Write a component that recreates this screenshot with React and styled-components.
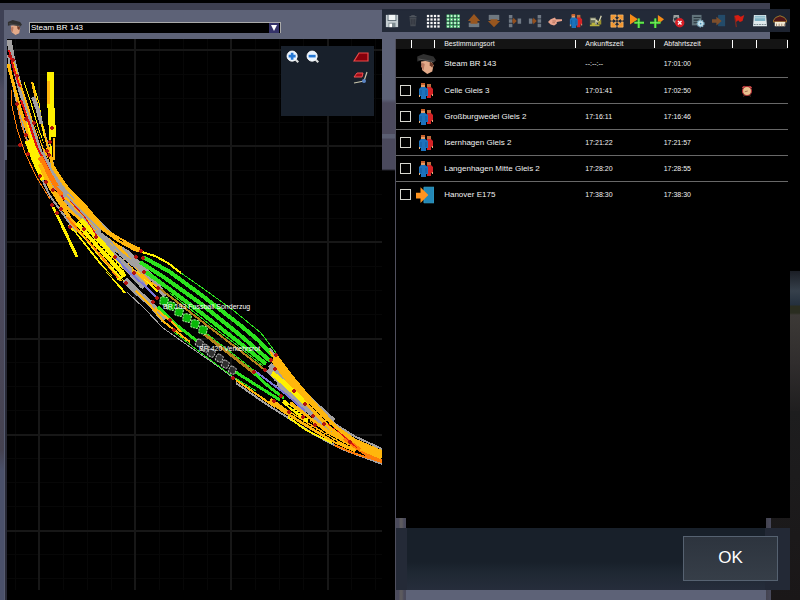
import React from "react";
import styled, { createGlobalStyle } from "styled-components";

const GlobalStyle = createGlobalStyle`
  * { box-sizing: border-box; }
  body {
    margin: 0;
    background: #000;
    color: #f2f2f2;
    font-family: "Liberation Sans", Arial, sans-serif;
  }
`;

const Page = styled.div`
  display: grid;
  grid-template-columns: minmax(0, 382fr) minmax(0, 418fr);
  min-height: 100vh;
  background: #000;
`;

const MapPane = styled.section`
  display: flex;
  flex-direction: column;
  padding: 10px 0 10px 7px;
  background:
    linear-gradient(#000 0 3px, #3d3f50 3px 10px, transparent 10px),
    linear-gradient(#3e4155 0 75px, #4d4b5f 90px 240px, #454250 450px, #4a5069 470px) left / 4px 100% no-repeat,
    linear-gradient(90deg, #565b70 0 5px, #262733 5px 7px) left bottom / 7px calc(100% - 160px) no-repeat,
    linear-gradient(#5d6277 0 170px, #000 170px);
`;

const DriverBar = styled.div`
  display: flex;
  flex: none;
  align-items: center;
  gap: 7px;
  height: 29px;
  padding: 6px 101px 0 0;
`;

const SelectBox = styled.div`
  position: relative;
  flex: 1;
  height: 11px;
  border: 1px solid #aaa;
  border-width: 1px 1px 0 1px;
  background: #000;
`;

const DriverSelect = styled.select`
  display: block;
  appearance: none;
  width: 100%;
  height: 10px;
  padding: 0 0 0 1px;
  border: 0;
  background: transparent;
  color: #fff;
  font: 8px/10px "Liberation Sans", Arial, sans-serif;
`;

const SelectArrow = styled.svg`
  position: absolute;
  right: 1px;
  top: 0;
  pointer-events: none;
`;

const MapArea = styled.div`
  position: relative;
  flex: 1;
  min-height: 300px;
  background: #000;
`;

const MapDrawing = styled.svg`
  position: absolute;
  inset: 0;
  width: 100%;
  height: 100%;
`;

const MapTools = styled.div`
  position: absolute;
  top: 7px;
  right: 8px;
  display: grid;
  grid-template-columns: 20px 20px 1fr 20px;
  grid-auto-rows: 20px;
  width: 93px;
  height: 70px;
  padding: 1px 3px 0 2px;
  background: #18202b;
`;

const ToolButton = styled.button`
  display: flex;
  align-items: center;
  justify-content: center;
  padding: 0;
  border: 0;
  background: transparent;
  grid-column: ${(p) => p.$column || "auto"};
  flex: ${(p) => (p.$grow ? 1 : "none")};
  opacity: ${(p) => (p.$dim ? 0.75 : 1)};
`;

const SchedulePane = styled.section`
  display: flex;
  flex-direction: column;
  padding-top: 9px;
  background:
    linear-gradient(#000 0 3px, #3d3f50 3px 10px, #5d6277 11px) 0 0 / calc(100% - 30px) 39px no-repeat,
    linear-gradient(#5d6277 0 60px, #4c4a5d 64px 95px, #5b5f73 95px 99px, #4a495c 100px 130px, #000 132px) 0 39px / 14px 150px no-repeat,
    linear-gradient(#1b1e25, #36404b 20px, #24303e 34px, #2a2d20 35px 42px, #3c3936 44px, #302d2d 92px, #1f1e1f) right 271px / 10px 140px no-repeat,
    linear-gradient(#1d1d1e, #1a1718) right bottom / 29px 190px no-repeat,
    #000;
`;

const Toolbar = styled.div`
  display: flex;
  flex: none;
  height: 23px;
  margin-right: 10px;
  background: rgba(31, 38, 52, 0.93);
`;

const ScheduleBody = styled.div`
  display: flex;
  flex: 1;
  flex-direction: column;
  margin: 7px 0 0 14px;
  box-shadow: -1px 0 #50505e;
`;

const TableWrap = styled.div`
  flex: 1;
  margin-right: 10px;
  padding-right: 2px;
  background: #000;
`;

const Table = styled.table`
  width: 100%;
  table-layout: fixed;
  border-collapse: separate;
  border-spacing: 0;
`;

const Column = styled.col`
  width: ${(p) => p.$width}%;
`;

const HeadCell = styled.th`
  height: 10px;
  padding: 0 0 0 ${(p) => p.$indent || 0}px;
  background: linear-gradient(#fff, #fff) right 1px / 1px 8px no-repeat #141414;
  font-size: 7px;
  line-height: 9px;
  font-weight: normal;
  text-align: left;
  vertical-align: top;
  white-space: nowrap;
`;

const Row = styled.tr`
  height: ${(p) => (p.$first ? 29 : 26)}px;
  &:last-child td { border-bottom-color: transparent; }
`;

const Cell = styled.td`
  padding: ${(p) => (p.$first ? 2 : 0)}px 0 0 ${(p) => p.$indent || 0}px;
  border-bottom: 1px solid #686868;
  font-size: ${(p) => (p.$name ? 8 : 7)}px;
  line-height: 10px;
  white-space: nowrap;
  vertical-align: middle;
  svg { display: block; }
`;

const RowCheck = styled.input`
  display: block;
  appearance: none;
  width: 11px;
  height: 11px;
  margin: 0 0 0 4px;
  border: 1px solid #d8d8d0;
  background: #000;
  &:checked { background: #d8d8d0; }
`;

const FooterFrame = styled.footer`
  flex: none;
  padding: 10px 10px 10px 0;
  background:
    linear-gradient(90deg, #4a4a5b 0 3px, #5c5a5e 4px 6px, #4a4a5b 8px 10px, transparent 10px),
    linear-gradient(90deg, #43434f, #494a5c) right 29px top / 5px 100% no-repeat,
    linear-gradient(#000 0 50px, #5d6277 72px) 0 0 / calc(100% - 34px) 100% no-repeat;
`;

const Footer = styled.div`
  display: flex;
  justify-content: flex-end;
  padding: 8px 12px 9px;
  background:
    linear-gradient(90deg, #242a37 0 11px, transparent 11px calc(100% - 25px), #232936 calc(100% - 25px)),
    linear-gradient(#18202a 0 34px, #1f2833 45px, #262d3b);
`;

const OkButton = styled.button`
  width: 95px;
  height: 45px;
  padding: 0 0 2px;
  border: 1px solid #566271;
  background: linear-gradient(#2d343e, #363e48);
  color: #fff;
  font: 17px/20px "Liberation Sans", Arial, sans-serif;
`;

/* ---------- icons ---------- */

const ICONS = {
  save: (
    <g>
      <path d="M1 1H15V15H1Z" fill="#c4cdd1" />
      <path d="M3 1H13V8H3Z" fill="#55646e" />
      <path d="M4 1H12V7H4Z" fill="#f1f5f6" />
      <path d="M4 10H12V15H4Z" fill="#7d8a90" />
      <path d="M5 11H8V15H5Z" fill="#fff" />
    </g>
  ),
  trash: (
    <g>
      <path d="M4 4H12L11 14H5Z" fill="#454a52" />
      <path d="M4 3H12M6 2H10" stroke="#5c6168" strokeWidth="1" />
      <path d="M6 6V12M8 6V12M10 6V12" stroke="#30343c" />
    </g>
  ),
  gridWhite: <GridIcon fill="#f8f8f8" />,
  gridGreen: <GridIcon fill="#e4ffec" edge="#3fc468" />,
  up: (
    <g>
      <path d="M2 10H14V15H2Z" fill="#6f7880" />
      <path d="M8 0L15 8H12V11H4V8H1Z" fill="#98561f" />
    </g>
  ),
  down: (
    <g>
      <path d="M2 1H14V7H2Z" fill="#6f7880" />
      <path d="M4 6H12V8H15L8 15L1 8H4Z" fill="#98561f" />
    </g>
  ),
  merge: (
    <g>
      <path d="M1 1H5V5H1ZM1 6H5V10H1ZM1 11H5V15H1ZM11 5H15V11H11Z" fill="#707984" />
      <path d="M5 6H6V4L10 8L6 12V10H5Z" fill="#93501f" />
    </g>
  ),
  split: (
    <g>
      <path d="M1 5H5V11H1ZM11 1H15V5H11ZM11 6H15V10H11ZM11 11H15V15H11Z" fill="#707984" />
      <path d="M5 6H6V4L10 8L6 12V10H5Z" fill="#93501f" />
    </g>
  ),
  hand: (
    <g>
      <path d="M0 9L3 6L8 4L9 6H16V8L10 9L10 11L7 13L3 12Z" fill="#eaa48d" />
      <path d="M9 8H5M8 10H5" stroke="#a2604d" strokeWidth=".8" />
    </g>
  ),
  people: <PeopleShape />,
  service: (
    <g>
      <path d="M1 4H8V11H1Z" fill="#676b56" />
      <path d="M2 5H7V7H2Z" fill="#c7c8ad" />
      <path d="M1 13H12M3 11H7" stroke="#b8b13e" strokeWidth="2" />
      <path d="M8 12V7L11 10L14 2" fill="none" stroke="#d7d5b0" strokeWidth="1.5" />
      <path d="M9 5L11 9L14 6V12H11" fill="#9b922e" />
    </g>
  ),
  expand: (
    <g fill="#f2952d" stroke="#ffc37c" strokeWidth=".7">
      <path d="M1 1H7V3L5 4L7 6V7H6L4 5L3 7H1Z" />
      <path d="M15 1H9V3L11 4L9 6V7H10L12 5L13 7H15Z" />
      <path d="M1 15H7V13L5 12L7 10V9H6L4 11L3 9H1Z" />
      <path d="M15 15H9V13L11 12L9 10V9H10L12 11L13 9H15Z" />
    </g>
  ),
  addAfter: (
    <g>
      <path d="M0 0L9 6L0 12Z" fill="#f58b18" />
      <path d="M10 5V16M5 10H16" stroke="#2dbb25" strokeWidth="3" />
      <path d="M10 5V16M5 10H16" stroke="#8cf070" strokeWidth="1" />
    </g>
  ),
  addBefore: (
    <g>
      <path d="M9 1L16 6L9 12Z" fill="#f58b18" />
      <path d="M6 5V16M0 10H12" stroke="#2dbb25" strokeWidth="3" />
      <path d="M6 5V16M0 10H12" stroke="#8cf070" strokeWidth="1" />
    </g>
  ),
  remove: (
    <g>
      <path d="M3 1H9L10 7L5 11L2 8Z" fill="#9b9f9e" />
      <path d="M3 5L7 3L8 6L4 8Z" fill="#343b42" />
      <circle cx="10" cy="10" r="5.3" fill="#d71d25" />
      <path d="M8 8L12 12M12 8L8 12" stroke="#fff" strokeWidth="1.6" />
    </g>
  ),
  settings: (
    <g>
      <path d="M1 1H12V13H1Z" fill="#61737b" />
      <path d="M3 4H11M3 7H9M3 10H7" stroke="#29363f" strokeWidth="1.2" />
      <circle cx="11" cy="11" r="3.5" fill="#cde5ef" stroke="#85b9d0" strokeWidth="2" strokeDasharray="1.5 1" />
      <circle cx="11" cy="11" r="1" fill="#4089ad" />
    </g>
  ),
  exitDim: (
    <g>
      <path d="M7 1H15V14H7Z" fill="#24577b" />
      <path d="M0 6H5V3L11 8L5 13V10H0Z" fill="#9b5c28" />
    </g>
  ),
  flag: (
    <g>
      <path d="M3 2L5 15" stroke="#81291f" strokeWidth="1.4" />
      <path d="M3 2L7 1L10 3L14 1L12 8L9 9L7 7L5 9Z" fill="#d61d12" />
    </g>
  ),
  train: (
    <g>
      <path d="M1 1H15L16 14H0Z" fill="#dfe9ec" />
      <path d="M2 2H14V8H2Z" fill="#7db2c5" />
      <path d="M2 3H14V5H2Z" fill="#a9cbd6" />
      <path d="M1 12H15" stroke="#6d7d85" strokeDasharray="2 1" />
    </g>
  ),
  depot: (
    <g>
      <path d="M0 8L3 4L8 2L13 4L16 8V9H0Z" fill="#4f1519" stroke="#b8902f" strokeWidth=".9" />
      <path d="M2 9H14V14H2Z" fill="#f2ead5" />
      <path d="M4 11V14M7 11V14M10 11V14M13 11V14" stroke="#9a7c68" strokeWidth="1" />
    </g>
  ),
  zoomIn: <LensShape plus />,
  zoomOut: <LensShape />,
  signal: <path d="M1 12L6 4H15V12Z" fill="#86000b" stroke="#ed4949" strokeWidth="1.2" />,
  junction: (
    <g>
      <path d="M1 8L4 4H10L9 8Z" fill="#a30d18" stroke="#ef5252" />
      <path d="M1 14L11 12L14 3" fill="none" stroke="#c8c6ad" strokeWidth="1.2" />
      <circle cx="11" cy="12" r="2" fill="#5a84c4" />
    </g>
  ),
  driver: (
    <g>
      <path d="M4 6L12 5L14 9L13 14L9 16L5 13Z" fill="#e3aa89" />
      <path d="M5 7L7 8L6 13L4 10Z" fill="#b87860" />
      <path d="M11 6L14 8L13 11L11 9Z" fill="#6c3b2a" />
      <path d="M1 2L6 0L14 2L16 5L14 7L5 5L1 6Z" fill="#303030" />
      <path d="M2 4L14 6" stroke="#555" strokeWidth=".8" />
    </g>
  ),
  exit: (
    <g>
      <path d="M7 1H16V15H7Z" fill="#2488b6" stroke="#38a9cf" strokeWidth=".6" />
      <path d="M0 6H4V1L11 8L4 15V11H0Z" fill="#ff941f" />
    </g>
  ),
  clock: (
    <g>
      <path d="M2 4L5 2M14 4L11 2" stroke="#d95050" strokeWidth="2.4" />
      <circle cx="8" cy="8" r="6" fill="#e8c28f" stroke="#b02f35" strokeWidth="1.5" />
      <path d="M5 9L9 8M5 14L3 15M11 14L13 15" stroke="#8a5741" fill="none" />
    </g>
  ),
};

function GridIcon({ fill, edge = "none" }) {
  const cells = [1, 5, 9, 13];
  return (
    <g>
      {cells.map((y) =>
        cells.map((x) => (
          <rect key={x + "-" + y} x={x} y={y} width="2.6" height="2.6" fill={fill} stroke={edge} strokeWidth=".7" />
        ))
      )}
    </g>
  );
}

function PeopleShape() {
  return (
    <g>
      <path d="M9 1H13V5H9Z" fill="#bd6b3b" />
      <path d="M9 4H13L15 6V12H13V15H9Z" fill="#d42326" />
      <path d="M3 1H7V5H3Z" fill="#e79b63" />
      <path d="M3 0H7V2H3Z" fill="#c35f2b" />
      <path d="M1 6L3 4H7L10 6V13H8V16H3V13H1Z" fill="#1c72bd" />
      <path d="M3 7V12M8 7V12" stroke="#104f8c" strokeWidth=".7" />
      <path d="M1 12H2V14H1ZM14 11H15V13H14Z" fill="#eab07b" />
    </g>
  );
}

function LensShape({ plus }) {
  return (
    <g>
      <path d="M10 10L14 14" stroke="#d9dad9" strokeWidth="2.4" />
      <circle cx="7" cy="7" r="5.8" fill="#e9f4ff" stroke="#fff" strokeWidth="1" />
      <path d={plus ? "M7 3V11M3 7H11" : "M3 7H11"} stroke="#2678d4" strokeWidth="3" />
    </g>
  );
}

function Icon({ name, size = 14 }) {
  return (
    <svg width={size} height={size} viewBox="0 0 16 16" aria-hidden="true">
      {ICONS[name]}
    </svg>
  );
}

/* ---------- track map ---------- */

const GRAY = "#a3a1a1";
const AMBER = "#ffb60c";
const ORANGE = "#ff7c08";
const YELLOW = "#fff000";
const GREEN = "#2be31d";
const BROWN = "#b4821a";
const RED = "#e01010";
const BLUE = "#7c78d8";
const BLACK = "#000";

const TRACKS = [
  [GRAY, 5, "9,40 12,56 20,88 31,125 44,158 60,180 79,204 100,224 125,250 150,275 165,296"],
  [GRAY, 9, "26,120 38,150 54,181 76,209 98,232 122,258 146,286"],
  [GRAY, 13, "96,228 112,246 128,264 146,284"],
  [GRAY, 2, "33,98 42,124 50,153 55,172 68,191 92,214"],
  [GRAY, 2, "8,55 14,90 22,125 33,160 50,196 76,232"],
  [AMBER, 3, "8,64 14,86 20,108 28,133 40,164 53,190 70,211 95,232"],
  [AMBER, 2, "12,58 20,84 31,116 42,147 59,175 78,202 99,221"],
  [AMBER, 2, "32,82 38,109 47,144 54,168 68,188"],
  [ORANGE, 1, "11,90 12,106 17,129 25,153 37,178 50,199"],
  [ORANGE, 1, "17,100 19,115 25,137 34,157 46,181"],
  [YELLOW, 1, "24,82 31,103 39,130 47,151"],
  [YELLOW, 1, "33,83 39,103 44,136"],
  [YELLOW, 9, "29,140 34,154 40,168 45,179"],
  [YELLOW, 2, "26,112 29,130 36,153 44,172"],
  [GRAY, 4, "33,97 38,110 41,124"],
  [BLACK, 1, "28,102 36,130 43,152"],
  [BLACK, 1, "36,113 43,139 50,162"],
  [RED, 2, "9,50 14,70 20,87"],
  [RED, 2, "21,100 29,123 37,147 50,172 64,200"],
  [ORANGE, 5, "40,157 48,172 55,184 62,195"],
  [AMBER, 3, "49,147 53,168 66,187 86,207 101,225"],
  [AMBER, 4, "40,164 49,185 61,204 73,224 91,243"],
  [YELLOW, 7, "50,72 50,88 51,108 52,125 52,137"],
  [YELLOW, 2, "50,135 51,155"],
  [AMBER, 2, "54,138 54,160"],
  [AMBER, 3, "48,81 49,104"],
  [YELLOW, 3, "53,207 61,223 69,240 77,257"],
  [AMBER, 6, "66,196 85,213 103,230 124,255 149,283"],
  [AMBER, 5, "75,206 97,226 121,244 140,250"],
  [GRAY, 2, "58,186 78,208 98,228 118,250 140,274"],
  [AMBER, 2, "99,226 121,239 137,248"],
  [AMBER, 2, "60,207 75,223 96,247 121,281"],
  [YELLOW, 10, "79,221 90,234 102,247 114,262 122,278"],
  [BLACK, 1, "74,216 94,239 123,270", "3 1"],
  [BLACK, 1, "77,227 95,247 121,276", "4 1"],
  [ORANGE, 2, "67,217 80,232 95,249 118,278"],
  [YELLOW, 2, "69,225 84,243 104,268 125,293"],
  [BLACK, 1, "73,231 98,263 124,289"],
  [YELLOW, 1, "78,230 103,261 124,281"],
  [RED, 1, "70,201 84,216 97,236"],
  [GRAY, 6, "125,280 137,292 151,304 164,320"],
  [GRAY, 1, "127,292 145,309 163,328 190,347 219,367 247,388"],
  [GRAY, 4, "118,252 137,266 154,281"],
  [BLACK, 2, "101,231 116,242 139,255"],
  [BLACK, 1, "115,252 137,271 156,289", "5 1"],
  [BLUE, 2, "115,257 128,271 145,286 157,298"],
  [YELLOW, 2, "137,272 148,282 158,292"],
  [AMBER, 2, "132,270 146,279 159,288"],
  [AMBER, 2, "136,291 149,304 164,322 190,342"],
  [YELLOW, 2, "142,252 155,256 168,263 181,273"],
  [GREEN, 1, "181,273 201,287 233,310 261,333 277,354"],
  [GREEN, 4, "143,257 170,272 200,294 240,325 258,340 273,356"],
  [GREEN, 4, "140,262 165,278 200,303 240,335 270,361"],
  [GREEN, 4, "146,272 172,291 200,312 236,340 266,364"],
  [BROWN, 2, "159,288 181,305 209,327 238,349 265,370"],
  [GREEN, 1, "170,293 209,324 238,346 263,366"],
  [BROWN, 3, "204,334 222,348 240,362 254,373"],
  [GREEN, 1, "206,333 224,347 241,360 256,372"],
  [GREEN, 3, "158,307 174,323 197,341"],
  [GREEN, 3, "234,371 256,385 280,400"],
  [GREEN, 1, "174,332 201,353 232,376 256,391"],
  [GREEN, 3, "254,373 268,386 284,398"],
  [AMBER, 2, "155,308 173,323 181,332"],
  [AMBER, 2, "236,380 252,391 275,407"],
  [GRAY, 16, "272,366 290,386 308,405 330,425"],
  [GRAY, 2, "270,348 286,374 301,390 316,407 335,424 354,436 382,449"],
  [GRAY, 5, "270,365 286,381 302,395 318,413 337,432 361,448 382,457"],
  [GRAY, 2, "236,383 266,404 290,419 315,435 342,449 382,464"],
  [AMBER, 9, "274,358 290,379 305,397 319,413 335,430 354,443 382,455"],
  [AMBER, 5, "300,391 310,405 323,420 341,435 365,449 382,457"],
  [YELLOW, 5, "272,373 285,384 298,396 306,405"],
  [BLACK, 1, "270,377 287,391 304,409 322,429", "5 1"],
  [GRAY, 3, "277,384 295,399 313,416 332,434"],
  [BLUE, 2, "255,371 271,383 287,395 305,411"],
  [AMBER, 5, "270,400 285,411 306,424 331,439 356,450"],
  [AMBER, 4, "290,403 310,419 334,436 356,448"],
  [YELLOW, 4, "283,401 294,410 308,421"],
  [YELLOW, 2, "288,417 306,430 332,443"],
  [BLACK, 1, "288,405 307,418 327,434 350,446", "3 1"],
  [BLACK, 1, "291,414 314,428 337,442", "4 1"],
  [ORANGE, 4, "344,438 356,447 371,457 382,461"],
  [ORANGE, 2, "334,445 353,453 382,462"],
  [AMBER, 5, "361,448 382,457"],
  [RED, 1, "328,424 339,432 357,448"],
  [AMBER, 2, "270,351 283,373 294,385"],
  [BLACK, 1, "309,404 322,417 337,431", "4 2"],
];

const SIGNALS = [
  [10, 56], [13, 60], [17, 76], [17, 104], [26, 119], [34, 123], [26, 135], [20, 145], [28, 154],
  [52, 128], [50, 142], [47, 151], [49, 155], [40, 176], [46, 182], [53, 190], [52, 205], [57, 213],
  [61, 209], [70, 227], [84, 229], [96, 237], [115, 257], [126, 283], [134, 273], [136, 257],
  [141, 251], [143, 258], [144, 272], [158, 288], [157, 298], [153, 302], [170, 320], [174, 330],
  [233, 378], [254, 372], [265, 370], [271, 360], [276, 355], [275, 369], [281, 396], [274, 401],
  [289, 412], [303, 417], [315, 425], [294, 391], [305, 404], [313, 416], [324, 424], [350, 442],
];

const GREEN_CARS = [[164, 301], [171, 306], [179, 312], [187, 318], [195, 324], [203, 330]];
const GRAY_CARS = [[200, 343], [206, 348], [212, 353], [220, 358], [226, 364], [233, 370]];

const steps = (start, end) =>
  Array.from({ length: Math.floor((end - start) / 24) + 1 }, (_, i) => start + i * 24);

function TrackMap() {
  return (
    <MapDrawing viewBox="7 39 375 551" preserveAspectRatio="xMinYMin slice" role="img" aria-label="Gleisplan">
      <g shapeRendering="crispEdges">
        {steps(15, 382).map((x) => (
          <rect key={x} x={x} y="39" width="1" height="551" fill="#070707" />
        ))}
        {steps(50, 590).map((y) => (
          <rect key={y} x="7" y={y} width="375" height="1" fill="#070707" />
        ))}
        {[38, 134, 230, 327].map((x) => (
          <rect key={x} x={x} y="39" width="2" height="551" fill="#171717" />
        ))}
        {[49, 145, 241, 338, 434, 530].map((y) => (
          <rect key={y} x="7" y={y} width="375" height="2" fill="#171717" />
        ))}
        {TRACKS.map(([color, width, points, dash], i) => (
          <polyline key={i} points={points} fill="none" stroke={color} strokeWidth={width} strokeDasharray={dash} />
        ))}
        {SIGNALS.map(([x, y], i) => (
          <path key={i} d={`M${x - 1} ${y - 2}h2v1h1v2h-1v1h-2v-1h-1v-2h1z`} fill="#b3130f" />
        ))}
      </g>
      {GREEN_CARS.map(([x, y]) => (
        <rect key={x} x={x - 4} y={y - 4} width="8" height="8" rx="2" transform={`rotate(12 ${x} ${y})`} fill="#08b708" stroke="#a9f59b" strokeWidth="1" strokeDasharray="2 1" />
      ))}
      {GRAY_CARS.map(([x, y]) => (
        <rect key={x} x={x - 4} y={y - 3} width="7" height="7" rx="2" transform={`rotate(30 ${x} ${y})`} fill="#303030" stroke="#c4c4c4" strokeWidth="1" strokeDasharray="2 1" />
      ))}
      <g fill="#fff" fontSize="7" fontFamily="Liberation Sans, Arial, sans-serif">
        <text x="163" y="309">BR 193 Fussball Sonderzug</text>
        <text x="199" y="351">BR 420 Verkehrsrot</text>
      </g>
    </MapDrawing>
  );
}

/* ---------- data ---------- */

const TOOLS = [
  ["save", "Speichern"],
  ["trash", "Löschen"],
  ["gridWhite", "Raster"],
  ["gridGreen", "Raster aktiv"],
  ["up", "Nach oben"],
  ["down", "Nach unten"],
  ["merge", "Kuppeln"],
  ["split", "Abkuppeln"],
  ["hand", "Gehe zu"],
  ["people", "Fahrgäste"],
  ["service", "Güter"],
  ["expand", "Alle anzeigen"],
  ["addAfter", "Danach einfügen"],
  ["addBefore", "Davor einfügen"],
  ["remove", "Entfernen"],
  ["settings", "Eigenschaften"],
  ["exitDim", "Ausfahrt", true],
  ["flag", "Ziel"],
  ["train", "Zug"],
  ["depot", "Depot"],
];

const STOPS = [
  { icon: "driver", name: "Steam BR 143", arrival: "--:--:--", departure: "17:01:00", first: true },
  { icon: "people", name: "Celle Gleis 3", arrival: "17:01:41", departure: "17:02:50", alarm: true },
  { icon: "people", name: "Großburgwedel Gleis 2", arrival: "17:16:11", departure: "17:16:46" },
  { icon: "people", name: "Isernhagen Gleis 2", arrival: "17:21:22", departure: "17:21:57" },
  { icon: "people", name: "Langenhagen Mitte Gleis 2", arrival: "17:28:20", departure: "17:28:55" },
  { icon: "exit", name: "Hanover E175", arrival: "17:38:30", departure: "17:38:30" },
];

const ICON_SIZES = { driver: 20, people: 16, exit: 18 };
const ICON_INDENTS = { driver: 4, people: 6, exit: 4 };
const COLUMN_WIDTHS = [4, 6, 36, 20, 20, 6, 8];

export default function App() {
  return (
    <Page>
      <GlobalStyle />
      <MapPane>
        <DriverBar>
          <Icon name="driver" size={15} />
          <SelectBox>
            <DriverSelect aria-label="Lokführer" defaultValue="Steam BR 143">
              <option>Steam BR 143</option>
            </DriverSelect>
            <SelectArrow width="10" height="10" viewBox="0 0 10 10" aria-hidden="true">
              <path d="M0 0H10V10H0Z" fill="#343269" />
              <path d="M2 2H8L5 8Z" fill="#fff" />
            </SelectArrow>
          </SelectBox>
        </DriverBar>
        <MapArea>
          <TrackMap />
          <MapTools>
            <ToolButton type="button" aria-label="Vergrößern"><Icon name="zoomIn" /></ToolButton>
            <ToolButton type="button" aria-label="Verkleinern"><Icon name="zoomOut" /></ToolButton>
            <ToolButton type="button" aria-label="Signale" $column="4"><Icon name="signal" size={16} /></ToolButton>
            <ToolButton type="button" aria-label="Weichen" $column="4"><Icon name="junction" size={16} /></ToolButton>
          </MapTools>
        </MapArea>
      </MapPane>
      <SchedulePane>
        <Toolbar role="toolbar">
          {TOOLS.map(([name, label, dim]) => (
            <ToolButton key={name} type="button" aria-label={label} $grow $dim={dim}>
              <Icon name={name} />
            </ToolButton>
          ))}
        </Toolbar>
        <ScheduleBody>
          <TableWrap>
            <Table>
              <colgroup>
                {COLUMN_WIDTHS.map((width, i) => (
                  <Column key={i} $width={width} />
                ))}
              </colgroup>
              <thead>
                <tr>
                  <HeadCell />
                  <HeadCell />
                  <HeadCell $indent={9}>Bestimmungsort</HeadCell>
                  <HeadCell $indent={9}>Ankunftszeit</HeadCell>
                  <HeadCell $indent={9}>Abfahrtszeit</HeadCell>
                  <HeadCell />
                  <HeadCell />
                </tr>
              </thead>
              <tbody>
                {STOPS.map((stop) => (
                  <Row key={stop.name} $first={stop.first}>
                    <Cell>{!stop.first && <RowCheck type="checkbox" aria-label={stop.name} />}</Cell>
                    <Cell $indent={ICON_INDENTS[stop.icon]} $first={stop.first}>
                      <Icon name={stop.icon} size={ICON_SIZES[stop.icon]} />
                    </Cell>
                    <Cell $indent={9} $first={stop.first} $name>{stop.name}</Cell>
                    <Cell $indent={9} $first={stop.first}>{stop.arrival}</Cell>
                    <Cell $indent={9} $first={stop.first}>{stop.departure}</Cell>
                    <Cell $indent={8}>{stop.alarm && <Icon name="clock" size={12} />}</Cell>
                    <Cell />
                  </Row>
                ))}
              </tbody>
            </Table>
          </TableWrap>
          <FooterFrame>
            <Footer>
              <OkButton type="button">OK</OkButton>
            </Footer>
          </FooterFrame>
        </ScheduleBody>
      </SchedulePane>
    </Page>
  );
}
